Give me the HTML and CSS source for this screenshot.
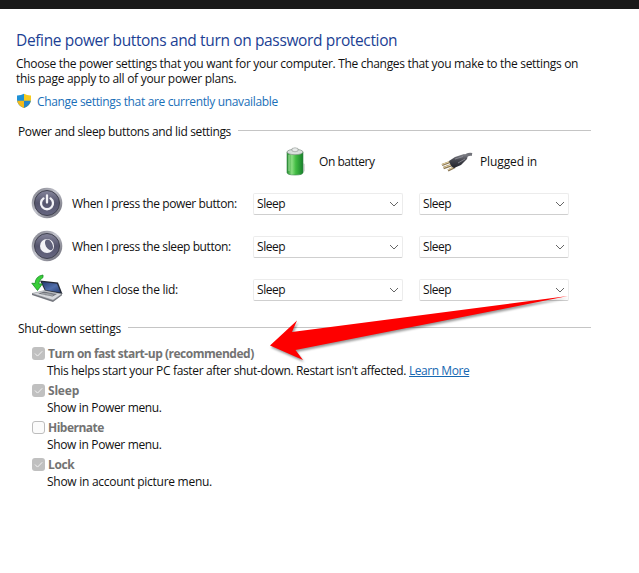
FILE: index.html
```html
<!DOCTYPE html>
<html lang="en-GB">
<head>
<meta charset="utf-8">
<title>Power options</title>
<link rel="stylesheet" href="styles.css">
</head>
<body>
<svg class="defs" width="0" height="0" aria-hidden="true">
  <defs>
    <linearGradient id="rim" x1="0" y1="0" x2="1" y2="1"><stop offset="0" stop-color="#777781"/><stop offset=".45" stop-color="#c2c3cc"/><stop offset="1" stop-color="#60606b"/></linearGradient>
    <linearGradient id="disc" x1="0" y1="0" x2="0" y2="1"><stop offset="0" stop-color="#85859b"/><stop offset=".5" stop-color="#55556d"/><stop offset="1" stop-color="#666680"/></linearGradient>
    <linearGradient id="cell" x1="0" y1="0" x2="1" y2="0"><stop offset="0" stop-color="#268c30"/><stop offset=".3" stop-color="#8bdf82"/><stop offset=".55" stop-color="#42bc43"/><stop offset="1" stop-color="#16802a"/></linearGradient>
    <linearGradient id="screen" x1="0" y1="0" x2="1" y2="1"><stop offset="0" stop-color="#253b72"/><stop offset=".55" stop-color="#526fab"/><stop offset="1" stop-color="#263e74"/></linearGradient>
    <linearGradient id="plug" x1="0" y1="0" x2="0" y2="1"><stop offset="0" stop-color="#85868d"/><stop offset=".45" stop-color="#45464e"/><stop offset="1" stop-color="#22232a"/></linearGradient>
  </defs>
</svg>
<div class="topbar"></div>
<main class="page">
  <h1 class="title"><span>Define power buttons and turn on password protection</span></h1>
  <p class="intro"><span class="intro-a">Choose the power settings that you want for your computer. The changes that you make to the settings on</span><br><span class="intro-b">this page apply to all of your power plans.</span></p>
  <div class="admin">
    <svg class="shield" width="16" height="16" viewBox="0 0 16 16"><path d="M8 .8Q5 2.7 1 2.6V7Q1 12 8 15Z" fill="#1f91d5"/><path d="M8 .8Q11 2.7 15 2.6V7Q15 12 8 15Z" fill="#f5cb20"/><path d="M1.1 7.7H8V15Q2 12.5 1.1 7.7Z" fill="#f2b91a"/><path d="M14.9 7.7H8V15Q14 12.5 14.9 7.7Z" fill="#2384cb"/></svg>
    <a class="link">Change settings that are currently unavailable</a>
  </div>

  <h2 class="group group-power"><span>Power and sleep buttons and lid settings</span></h2>
  <div class="sources">
    <div class="source source-battery">
      <svg width="24" height="32" viewBox="0 0 24 32"><path d="M17 16l5 2v7l-5 4z" fill="#d9d9d9"/><path d="M4 6v20.500Q4 29 12 29t8-2.500V6z" fill="url(#cell)" stroke="#348445" stroke-width=".6"/><ellipse cx="12" cy="6" rx="8" ry="2.700" fill="#d9dfdc" stroke="#849087" stroke-width=".7"/><path d="M9 5V2.500Q12 1 15 2.500V5Q12 6.500 9 5z" fill="#e8ebea" stroke="#8e9691" stroke-width=".6"/><path d="M6 9v16" stroke="#b8efb1" stroke-width="1" opacity=".7"/></svg>
      <span class="battery-text">On battery</span>
    </div>
    <div class="source source-plug">
      <svg width="34" height="24" viewBox="0 0 34 24"><path d="M24 8Q27 3.500 32 4.500" fill="none" stroke="#72737a" stroke-width="3"/><path d="M10 12L2 15M12 15L3.500 18M15 17L8 20.500" stroke="#8b7857" stroke-width="2.400"/><path d="M10 11.500L2 14.500M11 15L3.500 17.500M14 17L8 19.800" stroke="#e5d3a1" stroke-width="1"/><path d="M9 11L15 7 24 4 28 5 27 9 21 15 14 18Q11 17 9 11z" fill="url(#plug)"/><path d="M15 9l8-2.500M18 13l7-4" stroke="#999aa4" stroke-width=".7"/></svg>
      <span class="plug-text">Plugged in</span>
    </div>
  </div>
  <div class="row">
    <svg class="row-icon" width="32" height="32" viewBox="0 0 32 32"><circle cx="16" cy="16" r="15.3" fill="url(#rim)"/><circle cx="16" cy="16" r="12.5" fill="url(#disc)" stroke="#40414f"/><path d="M12.5 11.4a6 6 0 1 0 7 0M16 8.5v7" fill="none" stroke="#f2f2f6" stroke-width="2.3" stroke-linecap="round"/></svg>
    <span class="row-label"><span class="l-power">When I press the power button:</span></span>
    <div class="select"><span>Sleep</span><svg width="10" height="6" viewBox="0 0 10 6"><path d="M1 1l4 4 4-4"/></svg></div>
    <div class="select"><span>Sleep</span><svg width="10" height="6" viewBox="0 0 10 6"><path d="M1 1l4 4 4-4"/></svg></div>
  </div>
  <div class="row">
    <svg class="row-icon" width="32" height="32" viewBox="0 0 32 32"><circle cx="16" cy="16" r="15.3" fill="url(#rim)"/><circle cx="16" cy="16" r="12.5" fill="url(#disc)" stroke="#40414f"/><circle cx="16" cy="16" r="7" fill="#f2f2f6"/><ellipse cx="18" cy="14.800" rx="3.400" ry="5.800" transform="rotate(-28 18 14.800)" fill="#60617a"/></svg>
    <span class="row-label"><span class="l-sleep">When I press the sleep button:</span></span>
    <div class="select"><span>Sleep</span><svg width="10" height="6" viewBox="0 0 10 6"><path d="M1 1l4 4 4-4"/></svg></div>
    <div class="select"><span>Sleep</span><svg width="10" height="6" viewBox="0 0 10 6"><path d="M1 1l4 4 4-4"/></svg></div>
  </div>
  <div class="row">
    <svg class="row-icon" width="32" height="32" viewBox="0 0 32 32"><path d="M9 7.500L27 9.500 31.500 21 14 18z" fill="#242935"/><path d="M11 9L26 10.800 29.500 19.500 14.500 17z" fill="url(#screen)"/><path d="M1 20.500L13.500 17.500 31 21 22 27.200z" fill="#d7d9dd" stroke="#777b82" stroke-width=".5"/><path d="M1 20.500l21 6.700 9-6.200v1.300L22 29 1 22z" fill="#74777e"/><path d="M7 20.500l6-2 13 2.500-4.500 2.500z" fill="#70737a"/><path d="M10 21.500l11-2M14 22.700l9.500-2M10 20l12 2.700" stroke="#b5b8bc" stroke-width=".6"/><path d="M12 2Q4.500 3 4 10.500L.8 10.200 6.500 17.500 11.300 11 7.700 10.800Q8 6.500 12 4.500z" fill="#38cf37" stroke="#168c25" stroke-width=".8"/></svg>
    <span class="row-label"><span class="l-lid">When I close the lid:</span></span>
    <div class="select"><span>Sleep</span><svg width="10" height="6" viewBox="0 0 10 6"><path d="M1 1l4 4 4-4"/></svg></div>
    <div class="select"><span>Sleep</span><svg width="10" height="6" viewBox="0 0 10 6"><path d="M1 1l4 4 4-4"/></svg></div>
  </div>

  <h2 class="group group-shut"><span>Shut-down settings</span></h2>
  <div class="options">
    <div class="option">
      <div class="check"><i class="box on"><svg width="13" height="13" viewBox="0 0 13 13"><path d="M3 6.5l2.5 2.6 4.7-4.8"/></svg></i><b class="o-fast">Turn on fast start-up (recommended)</b></div>
      <div class="note"><span class="n-fast">This helps start your PC faster after shut-down. Restart isn't affected.</span><a class="learn">Learn More</a></div>
    </div>
    <div class="option">
      <div class="check"><i class="box on"><svg width="13" height="13" viewBox="0 0 13 13"><path d="M3 6.5l2.5 2.6 4.7-4.8"/></svg></i><b class="o-sleep">Sleep</b></div>
      <div class="note"><span class="n-power">Show in Power menu.</span></div>
    </div>
    <div class="option">
      <div class="check"><i class="box"></i><b class="o-hib">Hibernate</b></div>
      <div class="note"><span class="n-power">Show in Power menu.</span></div>
    </div>
    <div class="option">
      <div class="check"><i class="box on"><svg width="13" height="13" viewBox="0 0 13 13"><path d="M3 6.5l2.5 2.6 4.7-4.8"/></svg></i><b class="o-lock">Lock</b></div>
      <div class="note"><span class="n-lock">Show in account picture menu.</span></div>
    </div>
  </div>
</main>
<svg class="arrow" width="310" height="90" viewBox="260 285 310 90"><path d="M568 296L292 332 297 320.5 270 345.5 303 360 295.500 350z" fill="#fe0000"/></svg>
</body>
</html>
```

FILE: styles.css
```css
* { box-sizing: border-box; }
body {
  margin: 0;
  width: 639px;
  height: 573px;
  overflow: hidden;
  background: #fff;
  color: #111;
  font: 12px/15px "Open Sans", "Noto Sans", sans-serif;
  white-space: nowrap;
}
h1, h2, p { margin: 0; font-weight: 400; }
.defs { position: absolute; }
.topbar { height: 9px; background: #191919; }
.page { padding: 19px 0 0 16px; }
.title { font-size: 15.5px; line-height: 24px; color: #1c3f94; letter-spacing: -0.36px; }
.intro { margin-top: 4px; }
.intro-a { letter-spacing: -0.315px; }
.intro-b { letter-spacing: -0.29px; }
.admin { display: flex; align-items: center; gap: 5px; height: 18px; margin-top: 6px; }
.link { color: #1a6fb8; letter-spacing: -0.34px; }

.group { display: flex; align-items: center; gap: 7px; width: 575px; height: 16px; padding-left: 2px; font-size: 12px; letter-spacing: -0.35px; }
.group::after { content: ""; flex: 1; height: 1px; margin-bottom: 2px; background: #c5c5c5; }
.group-power { margin-top: 13px; }

.sources { display: grid; grid-template-columns: 160px 160px; margin-left: 267px; height: 43px; }
.source { display: flex; align-items: center; padding-top: 2px; }
.source-battery { gap: 12px; }
.source-plug { gap: 6px; margin-left: -3px; }
.battery-text { letter-spacing: -0.45px; }
.plug-text { letter-spacing: -0.12px; }

.row { display: grid; grid-template-columns: 40px 181px 166px 150px; align-items: center; height: 43px; margin-left: 16px; }
.row-icon { margin: -2px 0 0 -1px; }
.l-power { letter-spacing: -0.4px; }
.l-sleep { letter-spacing: -0.4px; }
.l-lid { letter-spacing: -0.28px; }
.select { display: flex; align-items: center; justify-content: space-between; width: 150px; height: 22px; padding: 0 3px; border: 1px solid #ececec; border-bottom-color: #cfcfcf; border-radius: 2px; letter-spacing: -0.45px; }
.select svg { fill: none; stroke: #666; stroke-width: 1; }

.group-shut { margin-top: 9px; letter-spacing: -0.25px; }
.options { display: grid; row-gap: 3px; margin: 9px 0 0 16px; }
.option { height: 34px; }
.check { display: flex; align-items: center; gap: 3px; height: 17px; color: #737373; }
.box { width: 13px; height: 13px; border: 1px solid #bdbdbd; border-radius: 3px; background: #fbfbfb; }
.box.on { border: 0; background: #c0c0c0; }
.box svg { display: block; fill: none; stroke: #f3f3f3; stroke-width: 1; }
.o-fast { letter-spacing: -0.48px; }
.o-sleep { letter-spacing: -0.2px; }
.o-hib { letter-spacing: -0.5px; }
.o-lock { letter-spacing: -0.4px; }
.note { display: flex; gap: 3px; height: 17px; padding-left: 15px; line-height: 17px; }
.n-fast { letter-spacing: -0.345px; }
.n-power { letter-spacing: -0.35px; }
.n-lock { letter-spacing: -0.27px; }
.learn { color: #1668b2; text-decoration: underline; letter-spacing: -0.45px; }
.arrow { position: absolute; left: 260px; top: 285px; filter: drop-shadow(1px 2px 1px rgba(0, 0, 0, 0.4)); }
```
